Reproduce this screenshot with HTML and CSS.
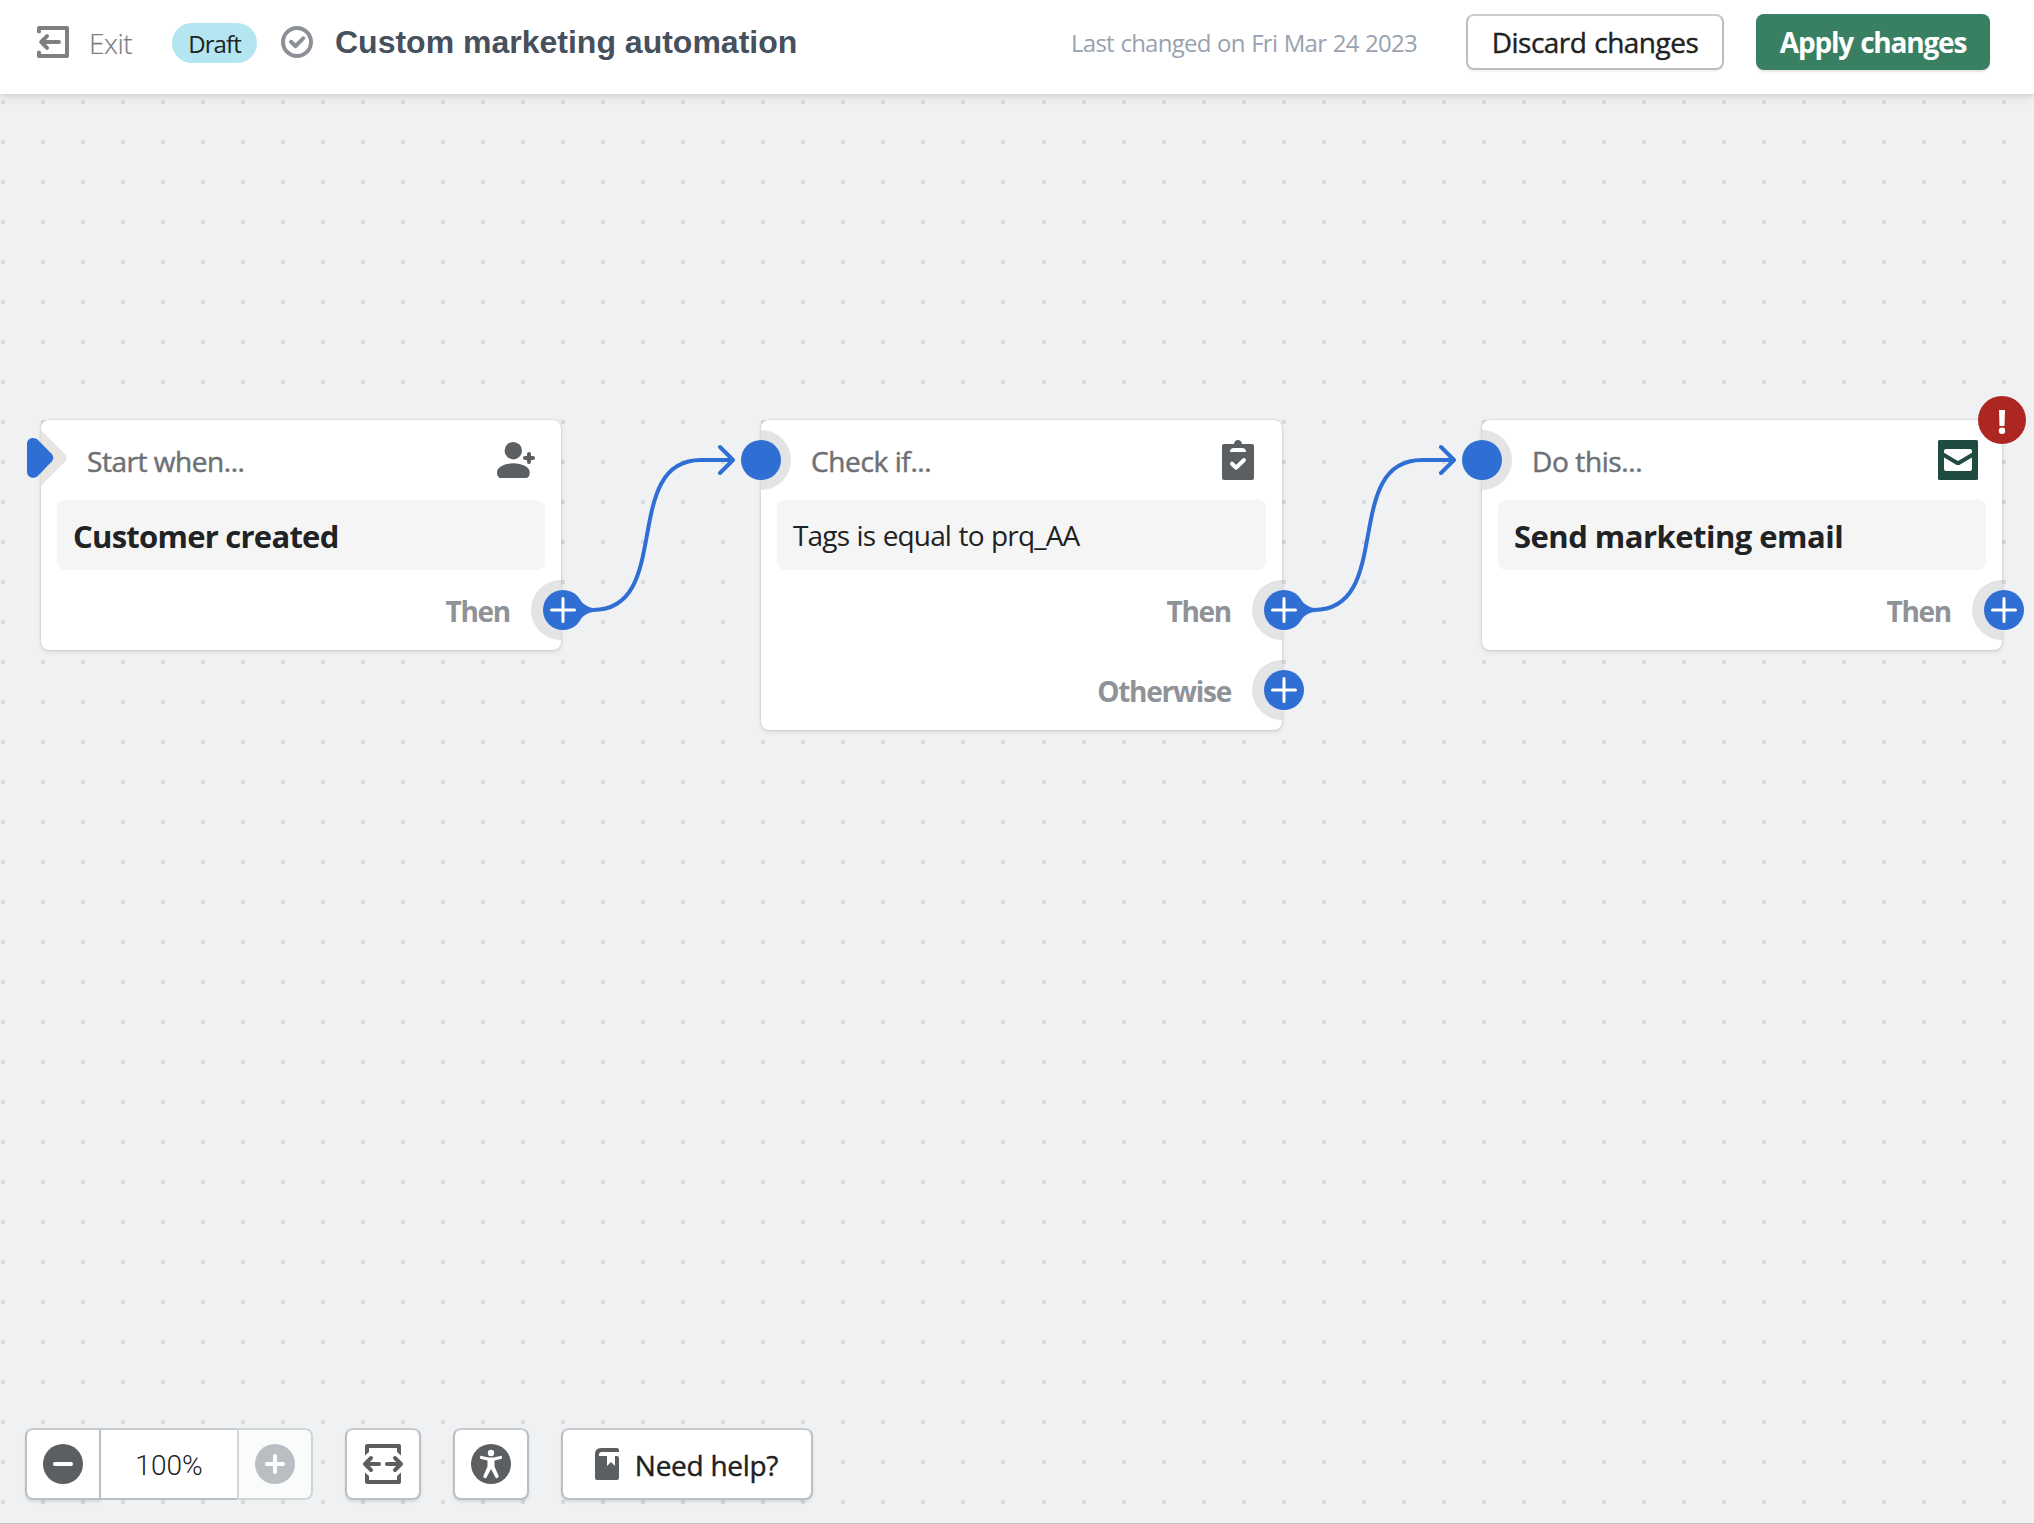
FILE: index.html
```html
<!DOCTYPE html>
<html lang="en">
<head>
<meta charset="utf-8">
<title>Custom marketing automation</title>
<link rel="stylesheet" href="styles.css">
</head>
<body>
<svg width="0" height="0" class="defs">
  <symbol id="plus" viewBox="0 0 40 40"><circle cx="20" cy="20" r="20" fill="#2f6ed3"/><path d="M20 8.5V31.5M8.5 20H31.5" stroke="#fff" stroke-width="3" stroke-linecap="round"/></symbol>
</svg>
<div class="app">
  <header class="header">
    <button class="exit">
      <svg width="32" height="32" viewBox="0 0 32 32" fill="none" stroke="#7f7f7f" stroke-width="4" stroke-linecap="round" stroke-linejoin="round"><path d="M2 5.5V2H30V30H2V26.5"/><path d="M22 16H5M10 10.2L4.2 16L10 21.8"/></svg>
      <span class="exit-label">Exit</span>
    </button>
    <span class="badge">Draft</span>
    <svg class="status" width="32" height="32" viewBox="0 0 32 32" fill="none" stroke="#8c9096" stroke-width="4" stroke-linecap="round" stroke-linejoin="round"><circle cx="16" cy="16" r="14"/><path d="M10 15.8L14.6 20.2L22.2 12.3"/></svg>
    <h1 class="title">Custom marketing automation</h1>
    <span class="changed">Last changed on Fri Mar 24 2023</span>
    <button class="btn discard">Discard changes</button>
    <button class="btn apply">Apply changes</button>
  </header>

  <main class="canvas">
    <section class="card card-start">
      <div class="clip"><svg class="chevron" width="27" height="56" viewBox="0 0 27 56"><path d="M0 0L24.5 24.5Q27 28 24.5 31L0 56Z" fill="#e9e5e2"/></svg><i class="ring ring-then"></i></div>
      <svg class="marker" width="27" height="40" viewBox="0 0 27 40"><path d="M0 6C0 0 7 -2 11.5 2.500L25 16.300Q27.500 20 25 23.300L11.500 37.200C7 42 0 39.500 0 34Z" fill="#2f6ed3"/></svg>
      <div class="head"><span class="label label-start">Start when...</span>
        <svg width="40" height="40" viewBox="0 0 40 40" fill="#5c5f62"><circle cx="16.300" cy="10.700" r="8.700"/><path d="M4 38Q0 38 0 32C0 27 8 23.300 16.300 23.300S32.700 27 32.700 32Q32.700 38 28.700 38Z"/><path d="M32 14V22M28 18H36" stroke="#5c5f62" stroke-width="4" stroke-linecap="round"/></svg></div>
      <div class="body heading start-heading">Customer created</div>
      <div class="port">Then</div>
      <svg class="add add-then"><use href="#plus"/></svg>
    </section>

    <section class="card card-check">
      <div class="clip"><i class="ring ring-in"></i><i class="ring ring-then"></i><i class="ring ring-else"></i></div>
      <i class="input"></i>
      <div class="head"><span class="label">Check if...</span>
        <svg width="40" height="40" viewBox="0 0 40 40"><path d="M6 4H16C16.500 -1.300 23.500 -1.300 24 4H34Q36 4 36 6V38Q36 40 34 40H6Q4 40 4 38V6Q4 4 6 4Z" fill="#5c5f62"/><path d="M12 12V11Q12.500 8 16 8H24Q27.500 8 28 11V12Z" fill="#fff"/><path d="M14 23.700L18.200 27.700L26 20" fill="none" stroke="#fff" stroke-width="4" stroke-linecap="round" stroke-linejoin="round"/></svg></div>
      <div class="body condition">Tags is equal to prq_AA</div>
      <div class="port">Then</div>
      <div class="port">Otherwise</div>
      <svg class="add add-then"><use href="#plus"/></svg>
      <svg class="add add-else"><use href="#plus"/></svg>
    </section>

    <section class="card card-action">
      <div class="clip"><i class="ring ring-in"></i><i class="ring ring-then"></i></div>
      <i class="input"></i>
      <div class="head"><span class="label">Do this...</span>
        <svg width="40" height="40" viewBox="0 0 40 40"><rect width="40" height="40" rx="1.500" fill="#1f4b40"/><rect x="6" y="9" width="28" height="22" rx="2" fill="#fff"/><path d="M5 14.500L18.500 22.500Q20 23.500 21.500 22.500L35 14.500" fill="none" stroke="#1f4b40" stroke-width="4"/></svg></div>
      <div class="body heading">Send marketing email</div>
      <div class="port">Then</div>
      <svg class="add add-then"><use href="#plus"/></svg>
      <svg class="error" width="48" height="48" viewBox="0 0 48 48"><circle cx="24" cy="24" r="24" fill="#ae2622"/><path d="M21 14H27L26.500 30H21.500Z" fill="#fff"/><circle cx="24" cy="34.700" r="3.200" fill="#fff"/></svg>
    </section>

    <svg class="link link-one" width="180" height="190" viewBox="0 0 180 190"><path d="M24.500 150.500Q28.500 156.500 38 158.300V161.800Q28.500 163.500 24.500 169.500L16 160Z" fill="#2f6ed3"/><path d="M33 160H37C118 160 64 10 145 10H176M164 -3L177 10L164 23" fill="none" stroke="#2f6ed3" stroke-width="4" stroke-linecap="round" stroke-linejoin="round"/></svg>
    <svg class="link link-two" width="180" height="190" viewBox="0 0 180 190"><path d="M24.500 150.500Q28.500 156.500 38 158.300V161.800Q28.500 163.500 24.500 169.500L16 160Z" fill="#2f6ed3"/><path d="M33 160H37C118 160 64 10 145 10H176M164 -3L177 10L164 23" fill="none" stroke="#2f6ed3" stroke-width="4" stroke-linecap="round" stroke-linejoin="round"/></svg>
  </main>

  <footer class="toolbar">
    <div class="zoom">
      <button class="tool zoom-out"><svg width="40" height="40" viewBox="0 0 40 40"><circle cx="20" cy="20" r="20" fill="#5c5f62"/><path d="M12 20H28" stroke="#fff" stroke-width="4" stroke-linecap="round"/></svg></button>
      <span class="zoom-value">100%</span>
      <button class="tool zoom-in"><svg width="40" height="40" viewBox="0 0 40 40"><circle cx="20" cy="20" r="20" fill="#babec3"/><path d="M12 20H28M20 12V28" stroke="#fff" stroke-width="4" stroke-linecap="round"/></svg></button>
    </div>
    <button class="tool square"><svg width="40" height="40" viewBox="0 0 40 40"><path d="M2 11.500V2Q2 0 4 0H36Q38 0 38 2V11.500L34 8V4H6V8ZM2 28.500V38Q2 40 4 40H36Q38 40 38 38V28.500L34 32V36H6V32Z" fill="#5c5f62"/><path d="M16 20H3M8 14L2 20L8 26M24 20H37M32 14L38 20L32 26" fill="none" stroke="#5c5f62" stroke-width="4" stroke-linecap="round" stroke-linejoin="round"/></svg></button>
    <button class="tool square"><svg width="40" height="40" viewBox="0 0 40 40"><circle cx="20" cy="20" r="20" fill="#5c5f62"/><circle cx="20" cy="9" r="3.200" fill="#fff"/><path d="M10.500 13.500L17 15H23L29.500 13.500" fill="none" stroke="#fff" stroke-width="3.200" stroke-linecap="round" stroke-linejoin="round"/><path d="M16.500 14H23.500V22.500L27.500 31.500Q28.200 33.700 26 34.200Q24.800 34.300 24.200 33L20 25L15.800 33Q15.200 34.300 14 34.200Q11.800 33.700 12.500 31.500L16.500 22.500Z" fill="#fff"/></svg></button>
    <button class="tool help"><svg width="24" height="32" viewBox="0 0 24 32"><path d="M6 0H22Q24 0 24 2V4H7Q4 4 4 7V8H12V18L16 14L20 18V8H22Q24 8 24 10V30Q24 32 22 32H2Q0 32 0 30V6Q0 0 6 0Z" fill="#5c5f62"/></svg><span>Need help?</span></button>
  </footer>
</div>
</body>
</html>
```
FILE: styles.css
```css
* { box-sizing: border-box; }

body {
  margin: 0;
  font-family: "Open Sans", "Noto Sans", sans-serif;
  font-size: 28px;
  color: #202223;
}

button {
  font: inherit;
  color: inherit;
  margin: 0;
  padding: 0;
  border: 0;
  background: none;
}

svg { display: block; flex: none; overflow: visible; }
.defs { position: absolute; }

.app {
  position: relative;
  display: flex;
  flex-direction: column;
  width: 2034px;
  height: 1524px;
  overflow: hidden;
  background-color: #f0f1f3;
  border-bottom: 1px solid #c2c4c7;
}

/* dot grid: two halves, each tiled every 40px */
.app::before,
.app::after {
  content: "";
  position: absolute;
  inset: 0 1014px 0 0;
  background: conic-gradient(from 270deg at 4px 4px, #d9dadc 90deg, transparent 0) 1px 20px / 40px 40px;
}
.app::after { inset: 0 0 0 1020px; background-position: 22px 20px; }

.header {
  position: relative;
  z-index: 2;
  display: flex;
  align-items: center;
  height: 94px;
  padding: 0 44px 10px 37px;
  background: #fff;
  box-shadow: 0 0 4px rgba(0, 0, 0, .1), 0 2px 10px rgba(0, 0, 0, .13);
}
.exit { display: flex; align-items: center; gap: 20px; width: 135px; color: #7f7f7f; }
.exit-label { font-weight: 300; letter-spacing: -.5px; line-height: 40px; padding-top: 2px; -webkit-text-stroke: .2px; }
.badge {
  width: 85px;
  height: 40px;
  margin-top: 2px;
  border-radius: 20px;
  background: #b3e6f0;
  font-size: 24px;
  line-height: 42px;
  letter-spacing: -.9px;
  text-align: center;
}
.status { margin-left: 24px; }
.title {
  margin: 0 auto 0 22px;
  font: 700 32px/36px "Liberation Sans", Arial, sans-serif;
  color: #47505d;
}
.changed { margin: 2px 49px 0 0; font-size: 24px; line-height: 36px; letter-spacing: -.75px; word-spacing: 1px; color: #98a2b0; }
.btn { height: 56px; border-radius: 8px; }
.discard {
  width: 258px;
  margin-right: 32px;
  border: 2px solid #babfc3;
  border-top-color: #c9cccf;
  font-weight: 500;
  line-height: 53px;
  letter-spacing: -.5px;
  word-spacing: 1px;
  -webkit-text-stroke: .4px;
  box-shadow: 0 2px 2px rgba(0, 0, 0, .05);
}
.apply {
  width: 234px;
  background: #397f62;
  color: #fff;
  font-weight: 700;
  line-height: 57px;
  letter-spacing: -1.2px;
  word-spacing: 1px;
  box-shadow: 0 2px 2px rgba(0, 0, 0, .1);
}

.canvas { position: relative; z-index: 1; flex: 1; }
.card {
  position: absolute;
  top: 326px;
  width: 520px;
  display: flex;
  flex-direction: column;
  background: #fff;
  border-radius: 8px;
  box-shadow: 0 0 2px rgba(23, 24, 24, .22), 0 2px 5px rgba(0, 0, 0, .1);
}
.card-start { left: 41px; }
.card-check { left: 761px; width: 521px; }
.card-action { left: 1482px; }
.head {
  position: relative;
  display: flex;
  align-items: center;
  justify-content: space-between;
  height: 80px;
  padding: 0 24px 0 50px;
}
.label { padding-top: 1px; font-weight: 500; letter-spacing: -.38px; color: #6d7175; -webkit-text-stroke: .5px; }
.label-start { margin-left: -4px; letter-spacing: -.46px; }
.body {
  position: relative;
  height: 70px;
  margin: 0 16px;
  padding-left: 16px;
  border-radius: 8px;
  background: #f5f5f5;
  line-height: 70px;
}
.heading { font-size: 31px; font-weight: 700; line-height: 72px; letter-spacing: -.52px; }
.start-heading { letter-spacing: -.75px; }
.condition { letter-spacing: -.85px; word-spacing: 1px; }
.port {
  position: relative;
  height: 80px;
  padding-right: 51px;
  font-weight: 700;
  line-height: 82px;
  letter-spacing: -1.25px;
  text-align: right;
  color: #8f9398;
}

/* connection points straddling the card edges */
.clip { position: absolute; inset: 0; overflow: hidden; }
.chevron { position: absolute; left: 0; top: 10px; }
.marker { position: absolute; left: -14px; top: 18px; z-index: 1; }
.ring { position: absolute; width: 60px; height: 60px; border-radius: 50%; background: #e3e4e6; }
.ring-in { left: -30px; top: 10px; }
.ring-then { right: -30px; top: 160px; }
.ring-else { right: -30px; top: 240px; }
.input { position: absolute; left: -20px; top: 20px; z-index: 1; width: 40px; height: 40px; border-radius: 50%; background: #2f6ed3; }
.add { position: absolute; right: -22px; z-index: 1; width: 40px; height: 40px; }
.add-then { top: 170px; }
.add-else { top: 250px; }
.error { position: absolute; right: -24px; top: -24px; }
.link { position: absolute; top: 356px; }
.link-one { left: 556px; }
.link-two { left: 1277px; }

.toolbar {
  position: relative;
  z-index: 1;
  display: flex;
  gap: 32px;
  padding: 0 25px 23px;
}
.zoom { display: flex; width: 288px; height: 72px; }
.tool {
  display: flex;
  align-items: center;
  justify-content: center;
  height: 72px;
  border: 2px solid #babfc3;
  border-top-color: #c9cccf;
  border-radius: 8px;
  background: #fff;
  box-shadow: 0 2px 3px rgba(0, 0, 0, .1);
}
.zoom-out { width: 76px; border-radius: 8px 0 0 8px; }
.zoom-value {
  flex: 1;
  border: solid #babfc3;
  border-width: 2px 0;
  border-top-color: #c9cccf;
  background: #fff;
  font-family: Roboto, sans-serif;
  font-weight: 300;
  line-height: 72px;
  text-align: center;
}
.zoom-in { width: 76px; border-color: #d2d5d8; border-radius: 0 8px 8px 0; background: #fafbfb; box-shadow: none; }
.square { width: 76px; }
.help { width: 252px; gap: 16px; padding-right: 1px; font-weight: 500; letter-spacing: -.28px; }
.help span { line-height: 68px; padding-top: 1px; -webkit-text-stroke: .4px; }
```
